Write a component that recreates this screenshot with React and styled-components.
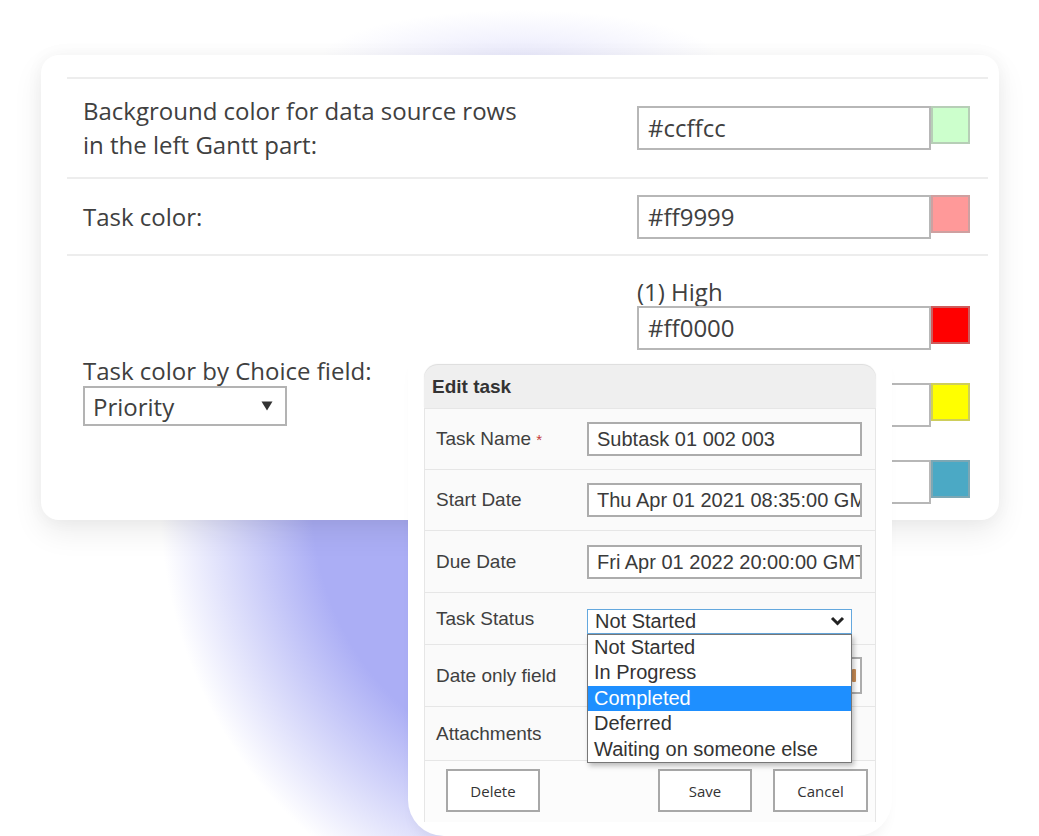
import React from "react"
import styled, { createGlobalStyle } from "styled-components"

const GlobalStyle = createGlobalStyle`
  html, body {
    margin: 0;
    padding: 0;
    background: #fff;
  }
  body {
    font-family: "Open Sans", "Noto Sans", sans-serif;
  }
  * {
    box-sizing: border-box;
  }
`

const Page = styled.div`
  position: relative;
  width: 1039px;
  height: 836px;
  overflow: hidden;
  padding: 55px 40px 0 41px;
  background: #fff;
`

// purple glow behind the lower left of the dialog
const Blob = styled.div`
  position: absolute;
  left: 0;
  top: 300px;
  width: 892px;
  height: 536px;
  background: radial-gradient(ellipse 400px 430px at 560px 200px, #abaef5 0%, #abaef5 62%, rgba(171, 174, 245, 0) 100%);
`

const TopGlow = styled.div`
  position: absolute;
  left: 300px;
  top: 0;
  width: 440px;
  height: 110px;
  background: radial-gradient(ellipse 200px 50px at 220px 60px, rgba(200, 200, 248, 0.4), rgba(200, 200, 248, 0) 100%);
`

const Card = styled.div`
  position: relative;
  z-index: 1;
  width: 958px;
  background: #fff;
  border-radius: 18px;
  padding: 22px 11px 0 26px;
  box-shadow: 0 12px 30px rgba(0, 0, 0, 0.08), 0 0 18px rgba(0, 0, 0, 0.04);
  color: #404040;
`

const SettingRow = styled.div`
  display: flex;
  justify-content: space-between;
  align-items: center;
  border-top: 2px solid #ededed;
  min-height: ${p => p.h || 0}px;
  padding: ${p => p.pad || "0 18px 0 16px"};
`

const Label = styled.div`
  font-size: 24px;
  line-height: ${p => p.lh || 34}px;
`

const ColorField = styled.div`
  display: flex;
  align-items: flex-start;
`

const HexInput = styled.div`
  width: 294px;
  height: 44px;
  border: 2px solid #b7b7b7;
  padding: 0 9px;
  font-size: 24px;
  line-height: 40px;
  background: #fff;
`

const Swatch = styled.div`
  width: 39px;
  height: 38px;
  background: ${p => p.color};
  border: 2px solid rgba(165, 165, 165, 0.55);
`

const ChoiceBlock = styled.div`
  display: flex;
  flex-direction: column;
`

const ChoiceSelect = styled.div`
  width: 204px;
  height: 40px;
  border: 2px solid #b3b3b3;
  display: flex;
  align-items: center;
  justify-content: space-between;
  padding: 0 12px 0 8px;
  font-size: 24px;
`

const ColorGroups = styled.div`
  display: flex;
  flex-direction: column;
  gap: 5px;
`

const DialogFrame = styled.div`
  position: absolute;
  z-index: 2;
  left: 408px;
  top: 350px;
  width: 484px;
  padding: 15px 16px 14px;
  background: #fff;
  border-radius: 14px 14px 36px 36px;
  box-shadow: 0 12px 14px -6px rgba(0, 0, 0, 0.05);
  font-family: "Liberation Sans", Arial, sans-serif;
  color: #3f3f3f;
`

const DialogHeader = styled.div`
  height: 43px;
  display: flex;
  align-items: center;
  padding-left: 8px;
  background: #efefef;
  border-radius: 14px 14px 0 0;
  box-shadow: 0 -1px 1px rgba(0, 0, 0, 0.14);
  font-weight: bold;
  font-size: 19px;
  color: #333;
`

const DialogRow = styled.div`
  display: flex;
  align-items: center;
  height: ${p => p.h}px;
  padding: 0 13px 0 11px;
  background: #fafafa;
  border: 1px solid #e6e6e6;
  border-bottom: none;
`

const FieldLabel = styled.div`
  width: 151px;
  font-size: 19px;
`

const Required = styled.span`
  color: #c43b3b;
  font-size: 15px;
`

const TextBox = styled.div`
  position: relative;
  width: 275px;
  height: ${p => p.h || 34}px;
  border: 2px solid #acacac;
  background: #fff;
  padding: 0 8px;
  font-size: 20px;
  line-height: ${p => (p.h || 34) - 4}px;
  white-space: nowrap;
  overflow: hidden;
  color: #3a3a3a;
`

const CalendarMark = styled.span`
  position: absolute;
  right: 4px;
  top: 10px;
  width: 4px;
  height: 13px;
  border-radius: 1px;
  background: #c98c55;
`

const SelectWrap = styled.div`
  position: relative;
  margin-top: 5px;
`

const StatusSelect = styled.div`
  width: 265px;
  height: 25px;
  border: 1px solid #64a8de;
  background: #fff;
  display: flex;
  align-items: center;
  justify-content: space-between;
  padding: 0 6px 0 7px;
  font-size: 20px;
  color: #333;
`

const ListBox = styled.div`
  position: absolute;
  z-index: 5;
  top: 25px;
  left: 0;
  width: 265px;
  background: #fff;
  border: 1px solid #777;
  box-shadow: 2px 3px 5px rgba(0, 0, 0, 0.25);
`

const Option = styled.div`
  height: 25.6px;
  line-height: 25.6px;
  padding-left: 6px;
  font-size: 20px;
  background: ${p => (p.active ? "#1e8fff" : "#fff")};
  color: ${p => (p.active ? "#fff" : "#333")};
  white-space: nowrap;
`

const Footer = styled.div`
  display: flex;
  padding: 8px 7px 10px 21px;
  background: #fcfcfc;
  border: 1px solid #e6e6e6;
  border-bottom: none;
`

const Button = styled.button`
  width: ${p => p.w || 94}px;
  height: 43px;
  margin-left: ${p => p.ml || "0"};
  border: 2px solid #a8a8a8;
  background: #fff;
  font-family: "Open Sans", "Noto Sans", sans-serif;
  font-size: 15px;
  color: #333;
  padding: 0;
`

const groups = [
  { name: "(1) High", value: "#ff0000" },
  { name: "(2) Normal", value: "#ffff00" },
  { name: "(3) Low", value: "#4ba9c5" },
]

const statuses = ["Not Started", "In Progress", "Completed", "Deferred", "Waiting on someone else"]

function ColorInput({ value }) {
  return (
    <ColorField>
      <HexInput>{value}</HexInput>
      <Swatch color={value} />
    </ColorField>
  )
}

function EditTask() {
  return (
    <DialogFrame>
      <DialogHeader>Edit task</DialogHeader>
      <DialogRow h={61}>
        <FieldLabel>Task Name <Required>*</Required></FieldLabel>
        <TextBox>Subtask 01 002 003</TextBox>
      </DialogRow>
      <DialogRow h={61}>
        <FieldLabel>Start Date</FieldLabel>
        <TextBox>Thu Apr 01 2021 08:35:00 GMT+0200</TextBox>
      </DialogRow>
      <DialogRow h={62}>
        <FieldLabel>Due Date</FieldLabel>
        <TextBox>Fri Apr 01 2022 20:00:00 GMT+0200</TextBox>
      </DialogRow>
      <DialogRow h={52}>
        <FieldLabel>Task Status</FieldLabel>
        <SelectWrap>
          <StatusSelect>
            <span>Not Started</span>
            <svg width="15" height="10" viewBox="0 0 15 10">
              <polyline points="2,2 7.5,7.5 13,2" fill="none" stroke="#222" strokeWidth="3" />
            </svg>
          </StatusSelect>
          <ListBox>
            {statuses.map(s => (
              <Option key={s} active={s === "Completed"}>{s}</Option>
            ))}
          </ListBox>
        </SelectWrap>
      </DialogRow>
      <DialogRow h={62}>
        <FieldLabel>Date only field</FieldLabel>
        <TextBox h={37}>
          <CalendarMark />
        </TextBox>
      </DialogRow>
      <DialogRow h={54}>
        <FieldLabel>Attachments</FieldLabel>
      </DialogRow>
      <Footer>
        <Button>Delete</Button>
        <Button ml="auto">Save</Button>
        <Button w={95} ml="21px">Cancel</Button>
      </Footer>
    </DialogFrame>
  )
}

export default function App() {
  return (
    <Page>
      <GlobalStyle />
      <Blob />
      <TopGlow />
      <Card>
        <SettingRow h={100}>
          <Label>
            Background color for data source rows
            <br />
            in the left Gantt part:
          </Label>
          <ColorInput value="#ccffcc" />
        </SettingRow>
        <SettingRow h={77}>
          <Label>Task color:</Label>
          <ColorInput value="#ff9999" />
        </SettingRow>
        <SettingRow pad="22px 18px 16px 16px">
          <ChoiceBlock>
            <Label lh={30}>Task color by Choice field:</Label>
            <ChoiceSelect>
              <span>Priority</span>
              <svg width="12" height="10" viewBox="0 0 12 10">
                <polygon points="0.5,0.5 11.5,0.5 6,9.5" fill="#333" />
              </svg>
            </ChoiceSelect>
          </ChoiceBlock>
          <ColorGroups>
            {groups.map(g => (
              <div key={g.name}>
                <Label lh={28}>{g.name}</Label>
                <ColorInput value={g.value} />
              </div>
            ))}
          </ColorGroups>
        </SettingRow>
      </Card>
      <EditTask />
    </Page>
  )
}
